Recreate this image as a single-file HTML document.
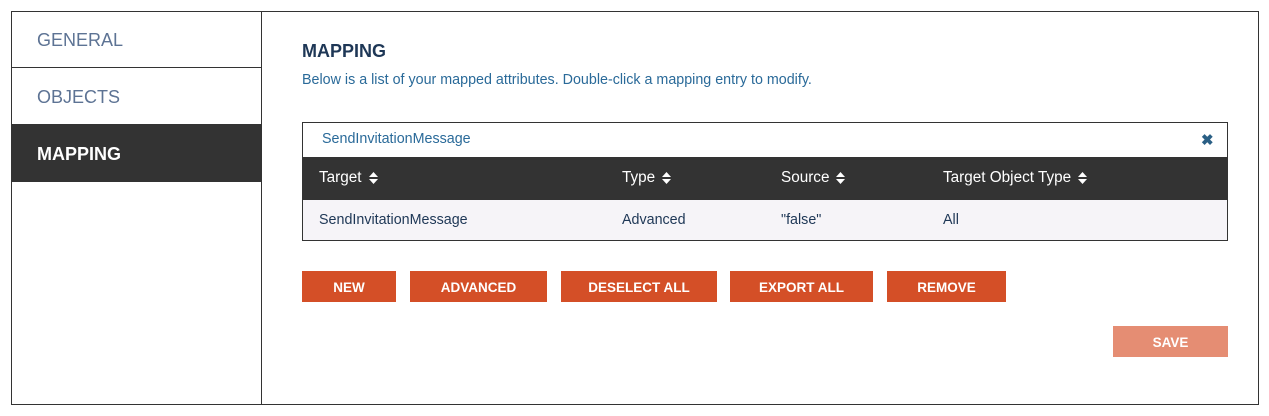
<!DOCTYPE html>
<html><head><style>
*{margin:0;padding:0;box-sizing:border-box}
body{width:1269px;height:416px;background:#fff;font-family:"Liberation Sans",sans-serif;position:relative;overflow:hidden}
.abs{position:absolute}
.outer{left:11px;top:11px;width:1248px;height:394px;border:1px solid #333}
.side{left:11px;top:11px;width:251px;height:394px;border-right:1px solid #333}
.nav{position:absolute;left:0;width:250px;padding-left:26px;font-size:18px;color:#5d7394}
.btn{position:absolute;top:271px;height:31px;background:#d44f27;color:#fff;font-size:13.5px;font-weight:bold;text-align:center;line-height:33px}
.arr{display:inline-block;margin-left:7px;vertical-align:middle;width:9px;height:12px}
.c{font-size:14.3px;color:#1e3756}
</style></head><body>
<div class="abs outer"></div>
<div class="abs side">
 <div class="nav" style="top:0;height:57px;line-height:58px;border-bottom:1px solid #333">GENERAL</div>
 <div class="nav" style="top:57px;height:56px;line-height:58px">OBJECTS</div>
 <div class="nav" style="top:113px;height:58px;line-height:60px;background:#333;color:#fff;font-weight:bold">MAPPING</div>
</div>
<div class="abs" style="left:302px;top:41px;font-size:18px;font-weight:bold;color:#1e3756">MAPPING</div>
<div class="abs" style="left:302px;top:72px;font-size:14.3px;color:#2a6a99">Below is a list of your mapped attributes. Double-click a mapping entry to modify.</div>
<div class="abs" style="left:302px;top:122px;width:926px;height:119px;border:1px solid #333;background:#f6f4f8">
 <div class="abs" style="left:0;top:0;width:924px;height:34px;background:#fff"></div>
 <div class="abs" style="left:19px;top:8px;font-size:14.3px;color:#2a6a99">SendInvitationMessage</div>
 <div class="abs" style="left:898px;top:8px;font-size:15px;font-weight:bold;color:#2a5f85">✖</div>
 <div class="abs" style="left:0;top:34px;width:924px;height:43px;background:#333;color:#fff;font-size:15.3px">
  <span class="abs" style="left:16px;top:12px">Target<svg class="arr" viewBox="0 0 9 12"><path d="M0 5L4.5 0L9 5ZM0 7L4.5 12L9 7Z" fill="#fff"/></svg></span>
  <span class="abs" style="left:319px;top:12px">Type<svg class="arr" viewBox="0 0 9 12"><path d="M0 5L4.5 0L9 5ZM0 7L4.5 12L9 7Z" fill="#fff"/></svg></span>
  <span class="abs" style="left:478px;top:12px">Source<svg class="arr" viewBox="0 0 9 12"><path d="M0 5L4.5 0L9 5ZM0 7L4.5 12L9 7Z" fill="#fff"/></svg></span>
  <span class="abs" style="left:640px;top:12px">Target Object Type<svg class="arr" viewBox="0 0 9 12"><path d="M0 5L4.5 0L9 5ZM0 7L4.5 12L9 7Z" fill="#fff"/></svg></span>
 </div>
 <div class="abs c" style="top:89px;left:16px">SendInvitationMessage</div>
 <div class="abs c" style="top:89px;left:319px">Advanced</div>
 <div class="abs c" style="top:89px;left:478px">"false"</div>
 <div class="abs c" style="top:89px;left:640px">All</div>
</div>
<div class="btn" style="left:302px;width:94px">NEW</div>
<div class="btn" style="left:410px;width:137px">ADVANCED</div>
<div class="btn" style="left:561px;width:156px">DESELECT ALL</div>
<div class="btn" style="left:730px;width:143px">EXPORT ALL</div>
<div class="btn" style="left:887px;width:119px">REMOVE</div>
<div class="btn" style="left:1113px;width:115px;top:326px;background:#e58d73">SAVE</div>
</body></html>
